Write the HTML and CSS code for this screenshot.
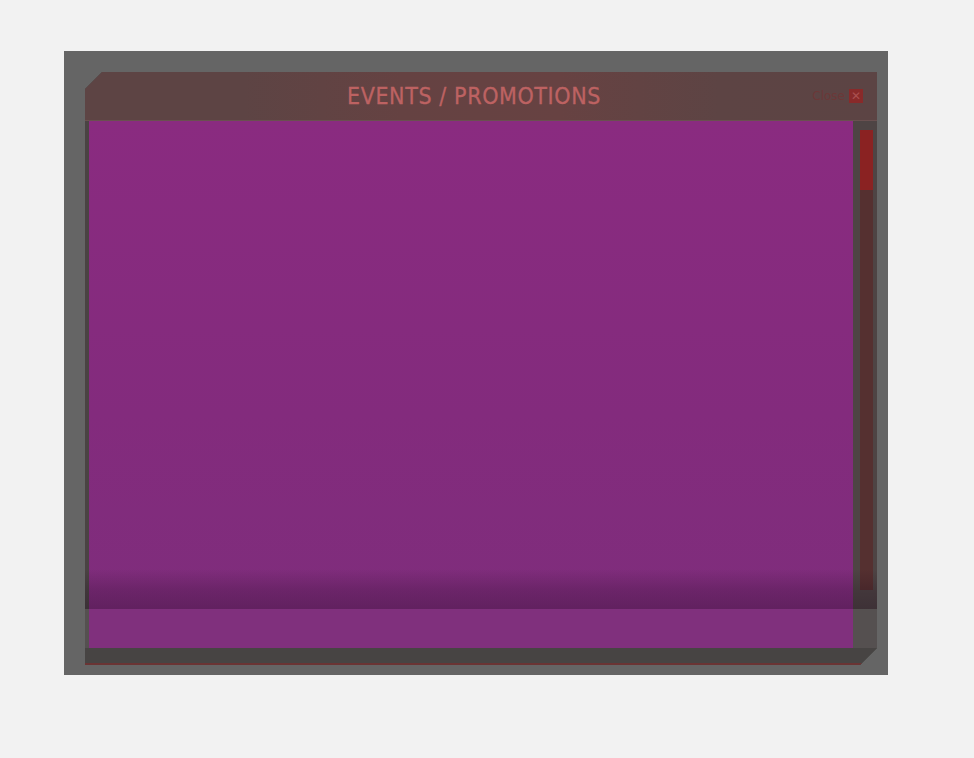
FILE: index.html
```html
<!DOCTYPE html>
<html>
<head>
<meta charset="utf-8">
<link rel="stylesheet" href="styles.css">
</head>
<body>
<div class="overlay">
  <div class="panel">
    <div class="header">
      <div class="title">EVENTS / PROMOTIONS</div>
      <div class="close"><span class="close-label">Close</span><span class="close-x">✕</span></div>
    </div>
    <div class="body">
      <div class="edge"></div>
      <div class="content"></div>
      <div class="scroll">
        <div class="track"><div class="thumb"></div></div>
      </div>
      <div class="shade"></div>
    </div>
    <div class="lower">
      <div class="edge lower-edge"></div>
      <div class="content lower-content"></div>
      <div class="lower-side"></div>
    </div>
    <div class="footer"></div>
  </div>
</div>
</body>
</html>
```

FILE: styles.css
```css
html, body { margin: 0; padding: 0; }
body {
  background: #f2f2f2;
  width: 974px;
  height: 758px;
  font-family: "DejaVu Sans Condensed", "DejaVu Sans", sans-serif;
}
.overlay {
  position: absolute;
  left: 64px;
  top: 51px;
  width: 824px;
  height: 624px;
  background: #656565;
  box-sizing: border-box;
  padding: 21px 11px 10px 21px;
}
.panel {
  width: 792px;
  height: 593px;
  display: flex;
  flex-direction: column;
  clip-path: polygon(17px 0, 100% 0, 100% calc(100% - 17px), calc(100% - 17px) 100%, 0 100%, 0 17px);
  background: #474443;
}
.header {
  height: 48px;
  flex: none;
  position: relative;
  background: linear-gradient(90deg, #5d4444 0%, #5d4444 20%, #654242 40%, #674242 60%, #5d4444 80%, #5c4444 100%);
  border-bottom: 1px solid #6a5050;
  display: flex;
  align-items: center;
  justify-content: center;
}
.title {
  color: #bd6262;
  font-size: 23px;
  letter-spacing: 0.6px;
  margin-left: -14px;
  line-height: 1;
  -webkit-text-stroke: 0.3px #bd6262;
}
.close {
  position: absolute;
  right: 14px;
  top: 17px;
  display: flex;
  align-items: center;
  gap: 4px;
}
.close-label {
  font-family: "DejaVu Sans", sans-serif;
  font-size: 12px;
  color: #6c3838;
}
.close-x {
  width: 14px;
  height: 14px;
  background: #892a2a;
  color: #a95050;
  font-size: 12px;
  line-height: 14px;
  text-align: center;
  font-family: "DejaVu Sans", sans-serif;
  font-weight: bold;
}
.body {
  height: 488px;
  flex: none;
  display: flex;
  position: relative;
}
.edge {
  width: 4px;
  background: #4a4343;
}
.content {
  width: 764px;
  background: linear-gradient(180deg, #8a2b80 0%, #832b7d 60%, #7f2d7c 100%);
}
.scroll {
  width: 24px;
  background: #4e4444;
  box-sizing: border-box;
  padding: 9px 4px 0 7px;
}
.track {
  height: 460px;
  background: #553030;
}
.thumb {
  height: 60px;
  background: #8a2222;
}
.shade {
  position: absolute;
  left: 0;
  right: 0;
  bottom: 0;
  height: 40px;
  background: linear-gradient(180deg, rgba(20,0,20,0) 0%, rgba(20,0,20,0.18) 50%, rgba(20,0,20,0.28) 100%);
}
.lower {
  height: 39px;
  flex: none;
  display: flex;
}
.lower-edge { background: #555050; }
.lower-content { background: #80307d; }
.lower-side { width: 24px; background: #555050; }
.footer {
  flex: 1;
  background: #474443;
  border-bottom: 2px solid #6a3434;
}
```
